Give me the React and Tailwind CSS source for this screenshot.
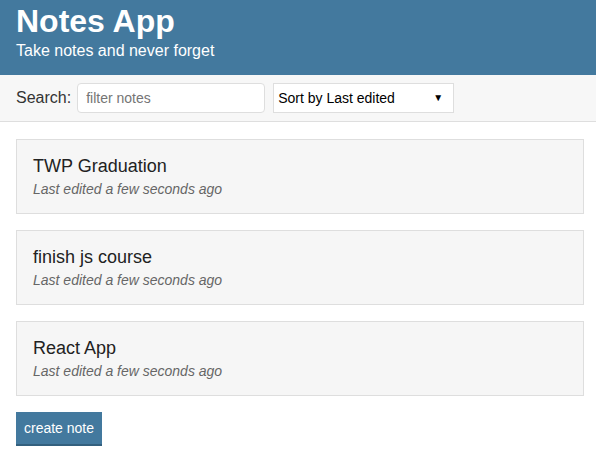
const NOTES = [
  { title: "TWP Graduation", edited: "Last edited a few seconds ago" },
  { title: "finish js course", edited: "Last edited a few seconds ago" },
  { title: "React App", edited: "Last edited a few seconds ago" },
];

export default function App() {
  return (
    <div className="min-h-screen bg-white text-[#333]" style={{ fontFamily: '"Liberation Sans", Arial, sans-serif' }}>
      <header className="bg-[#43799e] text-white h-[75px] px-4 pt-[3px]">
        <h1 className="text-[32px] font-bold leading-[36px]">Notes App</h1>
        <p className="text-base leading-5 mt-[2px]">Take notes and never forget</p>
      </header>

      <div className="bg-[#f7f7f7] border-b border-[#dedede] h-[47px] px-4 flex items-center">
        <label className="text-base text-[#333] mr-[6px]">Search:</label>
        <input
          type="text"
          placeholder="filter notes"
          className="w-[188px] h-[30px] bg-white border border-[#dedede] rounded-[4px] px-2 text-sm placeholder:text-[#757575] outline-none"
        />
        <div className="ml-[8px] w-[181px] h-[30px] bg-white border border-[#dedede] flex items-center justify-between pl-1 pr-[10px] text-sm text-black">
          <span>Sort by Last edited</span>
          <span className="text-[10px]">▼</span>
        </div>
      </div>

      <main className="pl-4 pr-3 pt-[17px] flex flex-col">
        <div className="flex flex-col gap-4">
          {NOTES.map((n) => (
            <div key={n.title} className="bg-[#f6f6f6] border border-[#dedede] h-[75px] px-4 pt-[14px]">
              <h2 className="text-lg leading-6 text-[#222]">{n.title}</h2>
              <p className="text-sm italic text-[#666] leading-5 mt-[1px]">{n.edited}</p>
            </div>
          ))}
        </div>
        <div className="mt-[16px]">
          <button className="bg-[#43799e] text-white text-sm h-[34px] px-[8px] border-b-2 border-[#33607e]">
            create note
          </button>
        </div>
      </main>
    </div>
  );
}
